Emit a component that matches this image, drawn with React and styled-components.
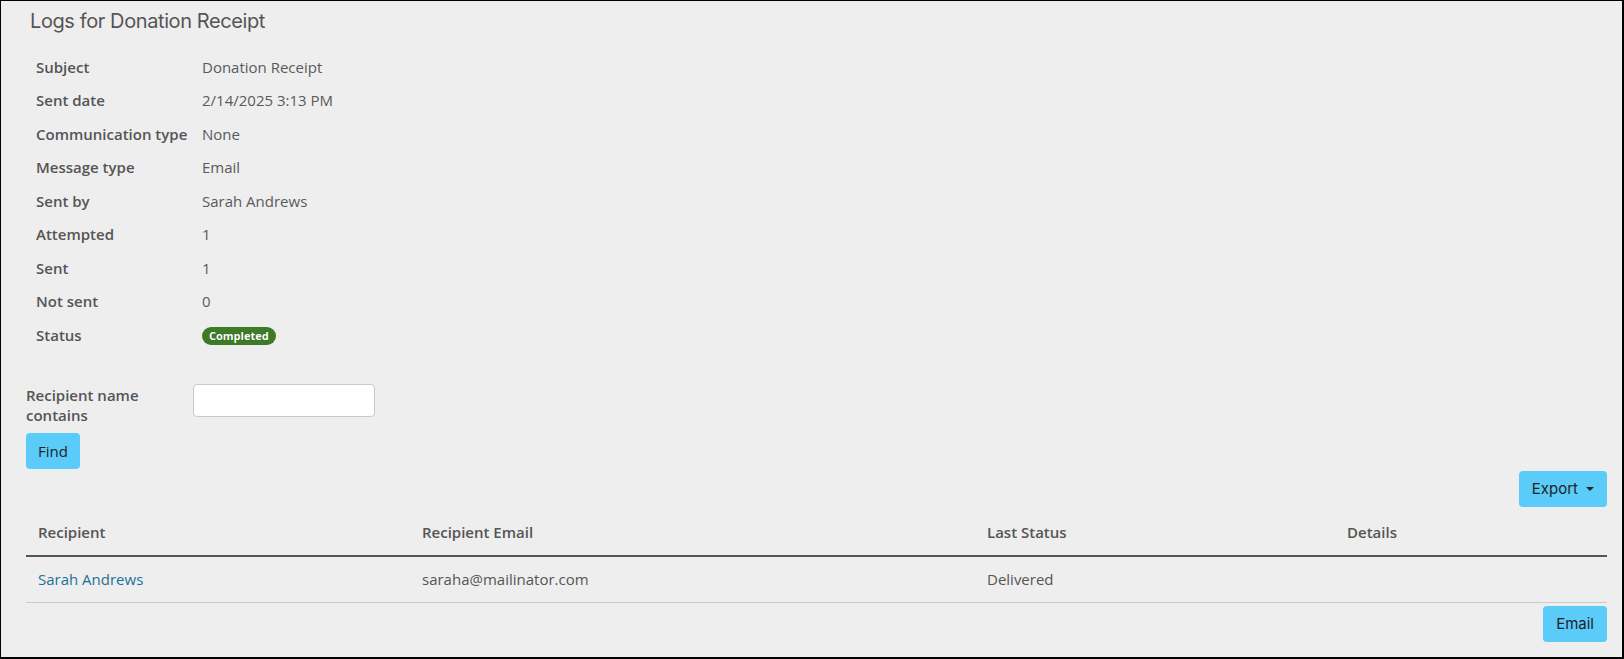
import styled, { createGlobalStyle } from "styled-components";

const GlobalStyle = createGlobalStyle`
	html, body {
		margin: 0;
		padding: 0;
		background: #eeeeee;
	}
	body {
		font-family: "Open Sans", "Liberation Sans", sans-serif;
		font-size: 15px;
		color: #555;
	}
	* {
		box-sizing: border-box;
	}
`;

const details = [
	["Subject", "Donation Receipt"],
	["Sent date", "2/14/2025 3:13 PM"],
	["Communication type", "None"],
	["Message type", "Email"],
	["Sent by", "Sarah Andrews"],
	["Attempted", "1"],
	["Sent", "1"],
	["Not sent", "0"],
];

const columns = [
	{ label: "Recipient", width: "384px" },
	{ label: "Recipient Email", width: "565px" },
	{ label: "Last Status", width: "360px" },
	{ label: "Details", width: "auto" },
];

function App() {
	return (
		<Frame>
			<GlobalStyle />
			<Title>Logs for Donation Receipt</Title>

			<DetailList>
				{details.map(([label, value]) => (
					<DetailRow key={label}>
						<DetailLabel>{label}</DetailLabel>
						<DetailValue>{value}</DetailValue>
					</DetailRow>
				))}
				<DetailRow>
					<DetailLabel>Status</DetailLabel>
					<DetailValue>
						<Badge>Completed</Badge>
					</DetailValue>
				</DetailRow>
			</DetailList>

			<SearchForm>
				<FieldRow>
					<FieldLabel>
						Recipient name
						<br />
						contains
					</FieldLabel>
					<TextInput type="text" />
				</FieldRow>
				<Button small>Find</Button>
			</SearchForm>

			<Toolbar>
				<Button>
					Export <Caret />
				</Button>
			</Toolbar>

			<Table>
				<thead>
					<tr>
						{columns.map((col) => (
							<Th key={col.label} style={{ width: col.width }}>
								{col.label}
							</Th>
						))}
					</tr>
				</thead>
				<tbody>
					<tr>
						<Td>
							<Link href="#">Sarah Andrews</Link>
						</Td>
						<Td>saraha@mailinator.com</Td>
						<Td>Delivered</Td>
						<Td></Td>
					</tr>
				</tbody>
			</Table>

			<Toolbar bottom>
				<Button>Email</Button>
			</Toolbar>
		</Frame>
	);
}

export default App;

const Frame = styled.div`
	width: 1624px;
	height: 659px;
	border-style: solid;
	border-color: #000;
	border-width: 1px 2px 2px 1px;
	padding: 8px 15px 0 25px;
	overflow: hidden;
`;

const Title = styled.h1`
	margin: 0 0 0 4px;
	font-family: Inter, "Open Sans", sans-serif;
	font-weight: 400;
	font-size: 20px;
	line-height: 24px;
	letter-spacing: -0.4px;
	color: #555;
`;

const DetailList = styled.div`
	display: flex;
	flex-direction: column;
	margin-top: 17px;
	padding-left: 10px;
`;

const DetailRow = styled.div`
	display: flex;
	align-items: center;
	height: 33.5px;
`;

const DetailLabel = styled.div`
	width: 166px;
	font-weight: 600;
	color: #555;
`;

const DetailValue = styled.div`
	color: #5a5a5a;
`;

const Badge = styled.span`
	display: inline-block;
	background: #3e7b27;
	color: #fff;
	font-weight: 700;
	font-size: 11px;
	line-height: 18px;
	padding: 0 7px;
	border-radius: 9px;
	text-shadow: 0 0 1px rgba(0, 0, 0, 0.4);
`;

const SearchForm = styled.div`
	display: flex;
	flex-direction: column;
	align-items: flex-start;
	gap: 8px;
	margin-top: 32px;
`;

const FieldRow = styled.div`
	display: flex;
	align-items: flex-start;
`;

const FieldLabel = styled.label`
	width: 167px;
	font-weight: 600;
	line-height: 20px;
	padding-top: 1px;
	color: #555;
`;

const TextInput = styled.input`
	width: 182px;
	height: 33px;
	margin: 0;
	border: 1px solid #c8c8c8;
	border-radius: 4px;
	background: #fff;
	outline: none;
`;

const Button = styled.button`
	display: inline-flex;
	align-items: center;
	gap: 8px;
	height: 36px;
	padding: 0 ${(props) => (props.small ? "12px" : "13px")};
	border: none;
	border-radius: 4px;
	background: #5bcbfa;
	color: #222;
	font-family: ${(props) =>
		props.small ? `"Open Sans", sans-serif` : `Inter, "Open Sans", sans-serif`};
	font-size: 15px;
	cursor: pointer;
`;

const Caret = styled.span`
	display: inline-block;
	width: 0;
	height: 0;
	border-left: 4px solid transparent;
	border-right: 4px solid transparent;
	border-top: 4px solid #222;
`;

const Toolbar = styled.div`
	display: flex;
	justify-content: flex-end;
	margin-top: ${(props) => (props.bottom ? "3px" : "2px")};
`;

const Table = styled.table`
	width: 100%;
	border-collapse: collapse;
`;

const Th = styled.th`
	text-align: left;
	font-weight: 600;
	color: #555;
	padding: 14px 12px 12px;
	line-height: 22px;
	border-bottom: 2px solid #555;
`;

const Td = styled.td`
	padding: 12px 12px;
	line-height: 21px;
	color: #555;
	border-bottom: 1px solid #cccccc;
`;

const Link = styled.a`
	color: #1d7199;
	text-decoration: none;
`;
